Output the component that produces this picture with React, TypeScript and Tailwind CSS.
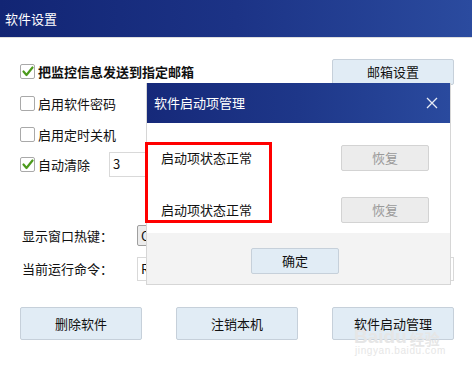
import React from "react";

const font = { fontFamily: '"Noto Sans CJK SC", "Microsoft YaHei", sans-serif' };

function Check({ checked }: { checked?: boolean }) {
  return (
    <div className="w-[15px] h-[15px] border border-[#a9a9a9] rounded-[2px] bg-white flex items-center justify-center shrink-0">
      {checked && (
        <svg width="12" height="11" viewBox="0 0 12 11">
          <path d="M1.5 5.5 L4.5 9 L10.5 1.5" fill="none" stroke="#4c9a1c" strokeWidth="2.2" strokeLinecap="round" strokeLinejoin="round" />
        </svg>
      )}
    </div>
  );
}

function Btn({ children, className = "" }: { children: React.ReactNode; className?: string }) {
  return (
    <div className={`h-[26px] bg-[#e1ecf5] border border-[#c6d0da] rounded-[2px] flex items-center justify-center text-[13px] text-[#111] ${className}`}>
      {children}
    </div>
  );
}

export default function App() {
  return (
    <div className="relative w-[472px] h-[370px] bg-white overflow-hidden text-[#111]" style={font}>
      <div className="h-[37px] bg-gradient-to-r from-[#122574] via-[#1c3386] to-[#2b4b9f] flex items-center pl-[5px] text-white text-[13px]">
        软件设置
      </div>
      <div className="h-px bg-[#dedede]" />

      <div className="pl-[20px] pr-[18px]">
        <div className="mt-[21px] h-[25px] flex items-center">
          <Check checked />
          <span className="ml-[3px] text-[13px] font-bold">把监控信息发送到指定邮箱</span>
          <Btn className="ml-auto w-[122px]">邮箱设置</Btn>
        </div>
        <div className="mt-[7px] h-[25px] flex items-center">
          <Check />
          <span className="ml-[3px] text-[13px]">启用软件密码</span>
        </div>
        <div className="mt-[6px] h-[25px] flex items-center">
          <Check />
          <span className="ml-[3px] text-[13px]">启用定时关机</span>
        </div>
        <div className="mt-[5px] h-[25px] flex items-center">
          <Check checked />
          <span className="ml-[3px] text-[13px]">自动清除</span>
          <div className="ml-[19px] w-[120px] h-[25px] border border-[#d9d9d9] flex items-start pl-[3px] pt-[1px] text-[13px]">3</div>
        </div>
        <div className="mt-[48px] h-[21px] flex items-center">
          <span className="ml-[2px] w-[115px] text-[13px]">显示窗口热键：</span>
          <div className="w-[180px] h-[21px] border border-[#9f9f9f] bg-[#ececec] rounded-[2px] flex items-center pl-[3px] text-[13px]">C</div>
        </div>
        <div className="mt-[11px] h-[24px] flex items-center">
          <span className="ml-[2px] w-[115px] text-[13px]">当前运行命令：</span>
          <div className="flex-1 h-[24px] border border-[#d9d9d9] flex items-center pl-[3px] text-[13px]">R</div>
        </div>
        <div className="mt-[26px] flex gap-[34px]">
          <Btn className="w-[122px] h-[33px]">删除软件</Btn>
          <Btn className="w-[122px] h-[33px]">注销本机</Btn>
          <Btn className="w-[122px] h-[33px]">软件启动管理</Btn>
        </div>
      </div>

      {/* watermark */}
      <div className="absolute left-[354px] top-[327px] flex items-end text-[#e6e6e6] leading-none pointer-events-none">
        <span className="text-[19px] font-bold" style={{ fontFamily: '"Liberation Sans", sans-serif' }}>Baidu</span>
        <span className="ml-[3px] text-[15px] font-bold" style={font}>经验</span>
      </div>
      <div className="absolute left-[355px] top-[346px] text-[#e6e6e6] text-[10px] leading-none tracking-[0.6px] pointer-events-none" style={{ fontFamily: '"Liberation Sans", sans-serif' }}>
        jingyan.baidu.com
      </div>

      {/* dialog */}
      <div className="absolute left-[146px] top-[83px] w-[305px] h-[202px] border border-[#d6d6d6] border-t-0 flex flex-col bg-white">
        <div className="h-[40px] bg-gradient-to-r from-[#16297a] via-[#1e3789] to-[#2a4a9e] flex items-center pl-[7px] pr-[12px] text-white text-[13px]">
          <span>软件启动项管理</span>
          <svg className="ml-auto" width="12" height="12" viewBox="0 0 12 12">
            <path d="M1 1 L11 11 M11 1 L1 11" stroke="#e8ecf5" strokeWidth="1.3" />
          </svg>
        </div>
        <div className="h-[110px] bg-white pl-[14px] pr-[21px] pt-[22px]">
          <div className="h-[26px] flex items-center">
            <span className="text-[13px]">启动项状态正常</span>
            <div className="ml-auto w-[88px] h-[26px] bg-[#ececec] border border-[#d3d3d3] rounded-[2px] flex items-center justify-center text-[13px] text-[#9a9a9a]">恢复</div>
          </div>
          <div className="mt-[26px] h-[26px] flex items-center">
            <span className="text-[13px]">启动项状态正常</span>
            <div className="ml-auto w-[88px] h-[26px] bg-[#ececec] border border-[#d3d3d3] rounded-[2px] flex items-center justify-center text-[13px] text-[#9a9a9a]">恢复</div>
          </div>
        </div>
        <div className="flex-1 bg-[#f3f3f3] pl-[104px] pt-[15px]">
          <Btn className="w-[88px] h-[25px]">确定</Btn>
        </div>
      </div>

      {/* red annotation */}
      <div className="absolute left-[145px] top-[142px] w-[127px] h-[81px] border-[3px] border-[#ff0000]" />
    </div>
  );
}
